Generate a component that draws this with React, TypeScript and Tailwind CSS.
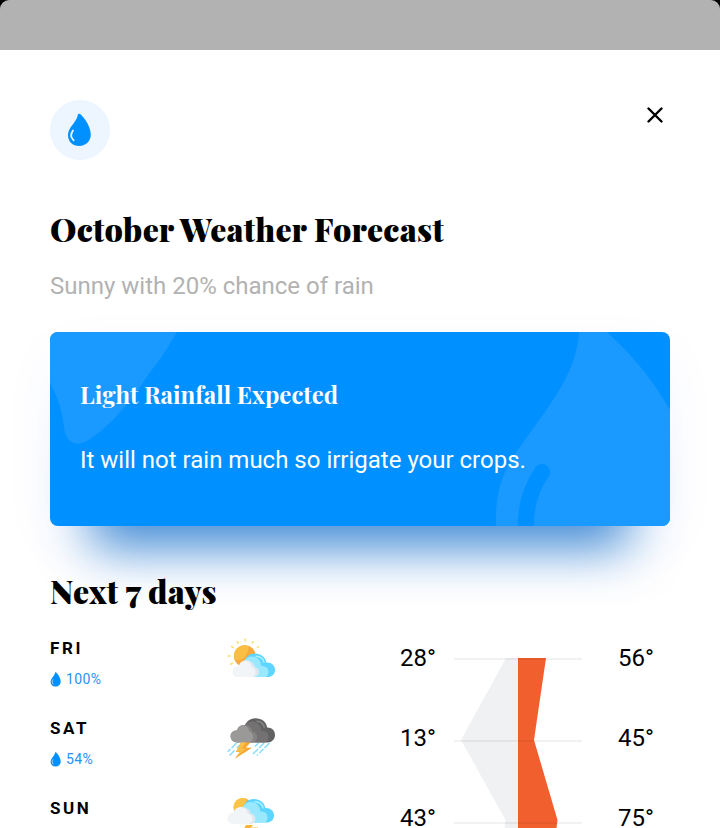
import React from "react";

const SERIF = "font-['Playfair_Display','Liberation_Serif',serif]";

function Drop({ className, shine }: { className: string; shine: string }) {
  return (
    <svg viewBox="0 0 24 34" className={className}>
      <path
        d="M10.9 1.6C11.2.7 12.5.5 13.4 1.2C18.2 5.4 23.8 14.2 23.8 21.6C23.8 28.3 18.9 33 12.2 33C5.6 33 1 28.6 1 22.3C1 18.6 2.4 16.1 4.8 12.8C8.1 8.5 10.2 5.7 10.9 1.6Z"
        fill="#0090ff"
      />
      <path d="M6 17.5C3.6 20.7 3.8 24.6 6.7 27.4" fill="none" stroke={shine} strokeWidth="1.8" strokeLinecap="round" />
    </svg>
  );
}

function BlueCloud() {
  return (
    <>
      <path d="M17 39V27C17 20 21.5 15.5 28 15.5C34 15.5 38.4 19 39.3 24.6C44.5 24.2 48 27.6 48 32C48 36.5 44.5 39 40.5 39Z" fill="#5cd6ff" />
      <path d="M17 39V23C19 20 21.5 18.5 24.5 18.5C30.5 18.5 34 22.5 34.2 28C39 28 41.5 30 41.5 34C41.5 37 40 39 37.5 39Z" fill="#99e8fe" />
      <path d="M29 18.3C33 18.5 36 20.6 37 24.3" fill="none" stroke="#afeefe" strokeWidth="1.4" strokeLinecap="round" />
    </>
  );
}

function PartlySunny() {
  return (
    <svg viewBox="0 0 48 48" className="size-12">
      <path
        d="M18.2 .5V3.5M10 3L11.4 5.7M26.4 3L25 5.7M4.2 8L6.7 10M32 8.3L30 9.9M.5 18H3.8M3.2 26.5L6 25"
        stroke="#f8df76"
        strokeWidth="1.6"
        fill="none"
      />
      <circle cx="17.8" cy="18" r="10.8" fill="#f8a83c" />
      <path d="M17.8 7.2A10.8 10.8 0 0 0 7.8 22C15 24 22 17 21.5 8C20.3 7.4 19 7.2 17.8 7.2Z" fill="#f9bf45" />
      <BlueCloud />
      <path d="M12 39C8.5 39 5.7 37.2 5.7 34C5.7 30.8 8.3 28.5 11.7 28.8C12.4 24.6 15.4 22.4 19.5 22.4C24.2 22.4 27.3 25.2 27.6 29C30.2 29.4 32 31.4 32 34C32 37 29.7 39 26.5 39Z" fill="#dfe7ef" />
      <path d="M12 39C8.5 39 5.7 37.2 5.7 34C5.7 30.8 8.3 28.5 11.7 28.8C12.4 24.6 15.4 22.4 19 22.4C22.5 23.4 24.2 25.6 24.4 28.7C27 29.4 28.4 31.6 28.4 34.5C28.4 37 27.2 39 24.5 39Z" fill="#f1f5f8" />
    </svg>
  );
}

function Thunderstorm() {
  return (
    <svg viewBox="0 6 48 48" className="size-12">
      <path
        d="M9.5 31L4.5 36M3.5 37L.8 39.7M15 31L9 37M7.5 38.5L1.5 44.5M31.5 31L28 34.5M37 31L26 42M42.5 31L32.5 41M30 43.5L31 42.5"
        stroke="#86dcf8"
        strokeWidth="1.5"
        strokeDasharray="7 1.5"
        fill="none"
      />
      <path d="M17 30V19C17 11 21.7 6.2 28.5 6.2C35 6.2 39.5 10 40.2 15.6C44.8 15.5 48 18.7 48 23C48 27.3 44.8 30.5 40.5 30.5H19Z" fill="#626262" />
      <path d="M17 30V14C19 10.7 21.5 9.5 24 9.5C30 9.5 34 13 34.2 18.5C39 18.8 41.5 21.2 41.5 25C41.5 28.4 39.8 30.5 37 30.5Z" fill="#737171" />
      <path d="M30 9.2C34 9.7 36.5 12 37.2 15.2" fill="none" stroke="#858383" strokeWidth="1.6" strokeLinecap="round" />
      <path d="M10.3 30.5C6.5 30.5 3.6 27.8 3.6 24.3C3.6 20.7 6.5 18.2 10 18.6C10.8 15 13.5 12.9 17.1 12.9C21.9 12.9 25 15.7 25.4 19.5C28.2 20 30.2 22 30.2 25C30.2 28.2 27.9 30.5 24.5 30.5Z" fill="#858282" />
      <path d="M10.3 30.5C6.5 30.5 3.6 27.8 3.6 24.3C3.6 20.7 6.5 18.2 10 18.6C10.8 15 13.5 12.9 16.6 12.9C20 14 22 16.5 22.2 19.3C24.6 20 26 22.2 26 25C26 28.2 24.5 30.5 22 30.5Z" fill="#9b9898" />
      <path d="M14.2 30.5H23.5L18.8 35.8H25L7.5 47L12.8 40H8.8Z" fill="#f8a62f" />
      <path d="M14.2 30.5H19L14.5 36.5H19L10.5 44L13.5 39.5H9.2Z" fill="#fbc04b" />
    </svg>
  );
}

function SunnyStorm() {
  return (
    <svg viewBox="0 6 48 48" className="size-12">
      <circle cx="16" cy="15.3" r="9.2" fill="#f8a83c" />
      <path d="M16 6.1A9.2 9.2 0 0 0 7.3 19.3C14 19.3 19 13 19.5 6.8C18.5 6.3 17.3 6.1 16 6.1Z" fill="#f9c447" />
      <g transform="translate(-1 -8.5)">
        <BlueCloud />
      </g>
      <g transform="translate(-5 -7.5)">
        <path d="M12 39.5C8.5 39.5 5.7 37.2 5.7 34C5.7 30.8 8.3 28.5 11.7 28.8C12.4 24.6 15.4 22.4 19.5 22.4C24.2 22.4 28.3 25.2 28.6 29C31.2 29.4 33.5 31.4 33.5 34C33.5 37 31.7 39.5 28.5 39.5Z" fill="#dfe7ef" />
        <path d="M12 39.5C8.5 39.5 5.7 37.2 5.7 34C5.7 30.8 8.3 28.5 11.7 28.8C12.4 24.6 15.4 22.4 19.5 22.4C23 23.4 25.4 25.6 25.4 28.7C28 29.4 30.4 31.6 30.4 34.5C30.4 37 28.5 39.5 26 39.5Z" fill="#f1f5f8" />
      </g>
      <path d="M19 33H26L20 40H15Z" fill="#f9b33b" />
      <path d="M24 35.5H31" stroke="#f8e3a5" strokeWidth="1.2" />
    </svg>
  );
}

const days = [
  { name: "FRI", rain: "100%", low: "28°", high: "56°", icon: <PartlySunny /> },
  { name: "SAT", rain: "54%", low: "13°", high: "45°", icon: <Thunderstorm /> },
  { name: "SUN", rain: null, low: "43°", high: "75°", icon: <SunnyStorm /> },
];

function Temps({ values }: { values: string[] }) {
  return (
    <div className="flex flex-col gap-14 pt-2">
      {values.map((v, i) => (
        <div key={i} className="h-6 text-[24px] leading-6">{v}</div>
      ))}
    </div>
  );
}

export default function App() {
  return (
    <div className="h-[828px] w-[720px] overflow-hidden bg-black font-[Roboto,sans-serif] text-black">
      <div className="h-[50px] rounded-t-[9px] bg-[#b2b2b2]" />
      <main className="h-[778px] bg-white px-[50px] pt-[50px]">
        <header className="flex h-[60px] justify-between">
          <div className="flex size-[60px] items-center justify-center rounded-full bg-[#edf6ff]">
            <Drop className="mr-[2px] h-[34px] w-6" shine="#edf6ff" />
          </div>
          <button className="flex size-[30px] items-center justify-center" aria-label="Close">
            <svg viewBox="0 0 16 16" className="size-4">
              <path d="M1.5 1.5L14.5 14.5M14.5 1.5L1.5 14.5" stroke="#000" strokeWidth="2.4" strokeLinecap="round" />
            </svg>
          </button>
        </header>

        <h1 className={`${SERIF} mt-[49px] h-10 text-[32px] leading-10 font-black tracking-[0.28px] whitespace-nowrap`}>
          October Weather Forecast
        </h1>
        <p className="mt-[21px] h-8 text-[24px] leading-8 whitespace-nowrap text-[#b2b2b2]">Sunny with 20% chance of rain</p>

        <section className="relative mt-[30px] h-[194px] rounded-[8px] bg-[#0090ff] px-[30px] pt-[46px] text-white shadow-[0_64px_50px_-42px_rgba(10,105,200,0.76),0_20px_60px_-6px_rgba(0,90,230,0.06)]">
          <svg viewBox="0 0 620 194" className="absolute inset-0 h-[194px] w-[620px] rounded-[8px]">
            <path d="M0 0H127Q114 23 98 43Q84 66 63 88Q42 108 32 111C21 114 15 106 14 95Q12 73 0 51Z" fill="#1a9aff" />
            <path d="M529 0H557Q595 34 620 78V194H446C445 158 453 140 467 119C500 72 526 43 529 0Z" fill="#1a9aff" />
            <path d="M492 140Q474 166 476 200" fill="none" stroke="#0090ff" strokeWidth="16" strokeLinecap="round" />
          </svg>
          <h2 className={`${SERIF} relative h-8 text-[24px] leading-8 font-bold whitespace-nowrap`}>Light Rainfall Expected</h2>
          <p className="relative mt-[34px] h-8 text-[24px] leading-8 whitespace-nowrap">It will not rain much so irrigate your crops.</p>
        </section>

        <h2 className={`${SERIF} relative mt-[45px] h-10 text-[32px] leading-10 font-black tracking-[0.28px] whitespace-nowrap`}>
          Next 7 days
        </h2>

        <div className="mt-[27px] flex">
          <div className="w-[350px]">
            {days.map((d) => (
              <div key={d.name} className="flex h-20">
                <div className="w-[177px]">
                  <div className="h-5 text-[17px] leading-5 font-bold tracking-[2.6px]">{d.name}</div>
                  {d.rain && (
                    <div className="mt-[11px] flex h-5 items-center gap-1 text-[14px] tracking-[0.4px] text-[#2a91f5]">
                      <Drop className="-ml-px h-[15px] w-[13px]" shine="#b9e0ff" />
                      <span>{d.rain}</span>
                    </div>
                  )}
                </div>
                {d.icon}
              </div>
            ))}
          </div>
          <div className="w-[54px]">
            <Temps values={days.map((d) => d.low)} />
          </div>
          <svg viewBox="0 0 128 170" className="mt-5 h-[170px] w-32">
            <path d="M52 0H64V170H50.5L51.5 162L7 82Z" fill="#f0f1f3" />
            <path d="M64 0H92L80 82L103.5 162L102.5 170H64Z" fill="#f25f2e" />
            <path d="M0 1H128M0 83H128M0 165H128" stroke="#000" strokeOpacity="0.05" strokeWidth="2" />
          </svg>
          <div className="ml-9 w-[52px]">
            <Temps values={days.map((d) => d.high)} />
          </div>
        </div>
      </main>
    </div>
  );
}
